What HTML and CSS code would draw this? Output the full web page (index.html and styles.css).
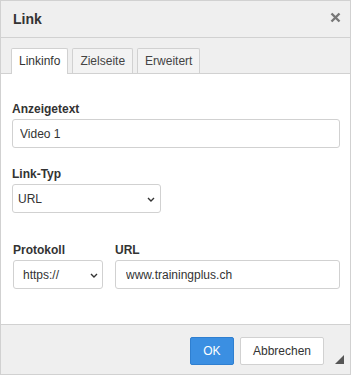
FILE: index.html
```html
<!DOCTYPE html>
<html>
<head>
    <meta charset="utf-8">
    <title>Link</title>
    <!-- Styling -->
    <link rel="stylesheet" href="styles.css">
</head>
<body>
    <div class="dialog">
        <div class="dialog-title">
            <span>Link</span>
            <button type="button" class="close" title="Schliessen">
                <svg width="11" height="11" viewBox="0 0 11 11">
                    <path d="M1.5 1.5 L9.5 9.5 M9.5 1.5 L1.5 9.5" stroke="#777" stroke-width="2.4" fill="none"/>
                </svg>
            </button>
        </div>

        <div class="tabs">
            <a class="tab active">Linkinfo</a>
            <a class="tab">Zielseite</a>
            <a class="tab">Erweitert</a>
        </div>

        <!--Link info form-->
        <div class="dialog-body">
            <div class="field">
                <label for="anzeige">Anzeigetext</label>
                <input type="text" id="anzeige" class="text-input" value="Video 1">
            </div>
            <div class="field">
                <label for="linktyp">Link-Typ</label>
                <div class="select-wrap typ">
                    <select id="linktyp" class="select">
                        <option>URL</option>
                        <option>Link zu Anker im Text</option>
                        <option>E-Mail</option>
                        <option>Telefon</option>
                    </select>
                    <svg class="chevron" width="8" height="5" viewBox="0 0 8 5">
                        <path d="M1 1 L4 4 L7 1" stroke="#333" stroke-width="1.4" fill="none"/>
                    </svg>
                </div>
            </div>
            <div class="field row">
                <div class="col-proto">
                    <label for="protokoll">Protokoll</label>
                    <div class="select-wrap proto">
                        <select id="protokoll" class="select">
                            <option>https://</option>
                            <option>http://</option>
                            <option>ftp://</option>
                        </select>
                        <svg class="chevron" width="8" height="5" viewBox="0 0 8 5">
                            <path d="M1 1 L4 4 L7 1" stroke="#333" stroke-width="1.4" fill="none"/>
                        </svg>
                    </div>
                </div>
                <div class="col-url">
                    <label for="url">URL</label>
                    <input type="text" id="url" class="text-input url" value="www.trainingplus.ch">
                </div>
            </div>
        </div>

        <div class="dialog-footer">
            <button type="button" class="btn ok">OK</button>
            <button type="button" class="btn">Abbrechen</button>
            <span class="resize"></span>
        </div>
    </div>
</body>
</html>
```

FILE: styles.css
```css
body {
    margin: 0;
    background-color: #fff;
    font-family: "Liberation Sans", Arial, sans-serif;
    color: #333;
}

.dialog {
    position: relative;
    width: 351px;
    height: 375px;
    box-sizing: border-box;
    border: 1px solid #d1d1d1;
    display: flex;
    flex-direction: column;
}

.dialog-title {
    height: 36px;
    background-color: #efefef;
    border-bottom: 1px solid #d1d1d1;
    display: flex;
    align-items: center;
    justify-content: space-between;
    padding: 0 9px 0 12px;
    font-size: 14px;
    font-weight: bold;
}

.close {
    background: none;
    border: none;
    padding: 0;
    margin-top: -3px;
    width: 11px;
    height: 11px;
    cursor: pointer;
    display: flex;
}

.tabs {
    background-color: #efefef;
    border-bottom: 1px solid #d1d1d1;
    height: 25px;
    padding: 10px 0 0 10px;
    display: flex;
    gap: 4px;
}

.tab {
    height: 25px;
    box-sizing: border-box;
    padding: 0 7px;
    border: 1px solid #d1d1d1;
    border-bottom: none;
    border-radius: 2px 2px 0 0;
    background-color: #f3f3f3;
    font-size: 12px;
    line-height: 25px;
    color: #444;
    cursor: pointer;
}

.tab.active {
    background-color: #fff;
    height: 26px;
    color: #333;
}

.dialog-body {
    flex: 1;
    background-color: #fff;
    padding: 27px 10px 0 11px;
}

.field {
    margin-bottom: 18px;
}

.field label {
    display: block;
    font-size: 12px;
    font-weight: bold;
    line-height: 16px;
    margin-bottom: 2px;
}

.text-input {
    display: block;
    width: 100%;
    height: 29px;
    box-sizing: border-box;
    border: 1px solid #d1d1d1;
    border-radius: 3px;
    padding: 0 7px;
    font-family: "Liberation Sans", Arial, sans-serif;
    font-size: 12px;
    color: #333;
}

.select-wrap {
    position: relative;
}

.select {
    -webkit-appearance: none;
    appearance: none;
    display: block;
    width: 100%;
    height: 29px;
    box-sizing: border-box;
    border: 1px solid #d1d1d1;
    border-radius: 3px;
    background-color: #fff;
    padding: 0 20px 0 5px;
    font-family: "Liberation Sans", Arial, sans-serif;
    font-size: 12px;
    color: #333;
}

.chevron {
    position: absolute;
    top: 13px;
    right: 6px;
    pointer-events: none;
}

.typ {
    width: 149px;
}

.row {
    display: flex;
    gap: 12px;
    margin-top: 29px;
    padding-left: 1px;
}

.col-proto {
    width: 90px;
}

.proto .select {
    padding-left: 9px;
}

.proto .chevron {
    right: 5px;
}

.col-url {
    flex: 1;
}

.url {
    padding-left: 10px;
}

.dialog-footer {
    background-color: #efefef;
    border-top: 1px solid #d1d1d1;
    height: 50px;
    display: flex;
    justify-content: flex-end;
    align-items: flex-start;
    gap: 6px;
    padding: 12px 26px 0 0;
    box-sizing: border-box;
}

.btn {
    height: 28px;
    padding: 0 12px;
    border: 1px solid #d1d1d1;
    border-radius: 2px;
    background-color: #fff;
    font-family: "Liberation Sans", Arial, sans-serif;
    font-size: 12px;
    color: #333;
    cursor: pointer;
}

.btn.ok {
    background-color: #3b8fe2;
    border-color: #2f7fd0;
    color: #fff;
    width: 44px;
    padding: 0;
}

.btn:hover {
    opacity: 0.8;
}

.resize {
    position: absolute;
    right: 6px;
    bottom: 10px;
    width: 0;
    height: 0;
    border-left: 9px solid transparent;
    border-bottom: 9px solid #555;
}
```
